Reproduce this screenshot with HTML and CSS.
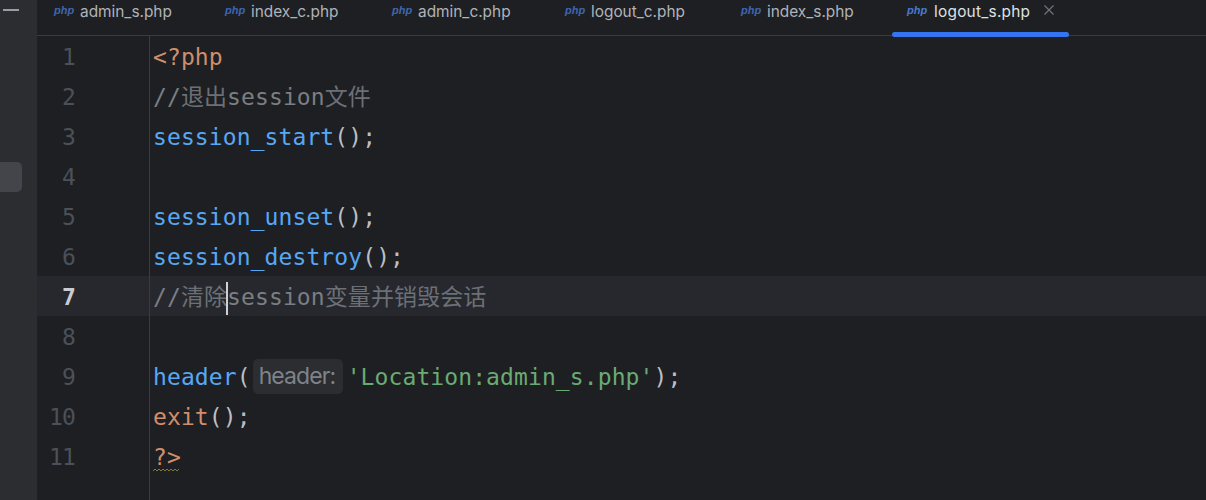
FILE: index.html
```html
<!DOCTYPE html>
<html lang="zh">
<head>
<meta charset="utf-8">
<title>logout_s.php</title>
<link rel="stylesheet" href="styles.css">
</head>
<body>
<div class="app">
  <aside class="rail">
    <div class="rail-dash"></div>
    <div class="rail-item"></div>
  </aside>
  <main class="main">
    <nav class="tabs">
      <div class="tab t1"><span class="php">php</span><span class="name">admin_s.php</span></div>
      <div class="tab t2"><span class="php">php</span><span class="name">index_c.php</span></div>
      <div class="tab t3"><span class="php">php</span><span class="name">admin_c.php</span></div>
      <div class="tab t4"><span class="php">php</span><span class="name">logout_c.php</span></div>
      <div class="tab t5"><span class="php">php</span><span class="name">index_s.php</span></div>
      <div class="tab active"><span class="php">php</span><span class="name">logout_s.php</span>
        <svg class="close" width="12" height="12" viewBox="0 0 12 12"><path d="M1.5 1.5l9 9M10.5 1.5l-9 9" stroke="#6f737a" stroke-width="1.2" fill="none"/></svg>
      </div>
    </nav>
    <section class="editor">
      <div class="line"><span class="no">1</span><span class="code"><span class="kw">&lt;?php</span></span></div>
      <div class="line"><span class="no">2</span><span class="code"><span class="cm">//<span class="cjk">退出</span>session<span class="cjk">文件</span></span></span></div>
      <div class="line"><span class="no">3</span><span class="code"><span class="fn">session_start</span><span class="pn">();</span></span></div>
      <div class="line"><span class="no">4</span><span class="code"></span></div>
      <div class="line"><span class="no">5</span><span class="code"><span class="fn">session_unset</span><span class="pn">();</span></span></div>
      <div class="line"><span class="no">6</span><span class="code"><span class="fn">session_destroy</span><span class="pn">();</span></span></div>
      <div class="line current"><span class="no">7</span><span class="code"><span class="cm">//<span class="cjk">清除</span><span class="caret"></span>session<span class="cjk">变量并销毁会话</span></span></span></div>
      <div class="line"><span class="no">8</span><span class="code"></span></div>
      <div class="line"><span class="no">9</span><span class="code"><span class="fn">header</span><span class="pn">(</span><span class="hint">header:</span><span class="str">'Location:admin_s.php'</span><span class="pn">);</span></span></div>
      <div class="line"><span class="no">10</span><span class="code"><span class="kw">exit</span><span class="pn">();</span></span></div>
      <div class="line"><span class="no">11</span><span class="code"><span class="kw squiggle">?&gt;<svg class="wave" width="28" height="4" viewBox="0 0 28 4"><path d="M0 3l2-2 2 2 2-2 2 2 2-2 2 2 2-2 2 2 2-2 2 2 2-2 2 2 2-2" fill="none" stroke="#807a3c" stroke-width="1"/></svg></span></span></div>
      <div class="gutter-fill"></div>
    </section>
  </main>
</div>
</body>
</html>
```
FILE: styles.css
```css
* { box-sizing: border-box; }
html, body { margin: 0; height: 100%; overflow: hidden; background: #1e1f22; }
.app { display: flex; height: 500px; width: 1206px; }
.rail { width: 37px; flex: none; background: #2b2d30; padding-top: 9px; }
.rail-dash { width: 16px; height: 2px; margin-left: 3px; background: #9a9da3; }
.rail-item { width: 22px; height: 30px; margin-top: 151px; background: #43454a; border-radius: 0 5px 5px 0; }
.main { flex: 1; min-width: 0; display: flex; flex-direction: column; }
.tabs { height: 36px; flex: none; display: flex; border-bottom: 1px solid #393b40; font-family: Inter, "Liberation Sans", sans-serif; font-size: 15.4px; color: #b0b3b9; }
.tab { display: flex; align-items: flex-start; padding: 3px 0 0 17px; height: 36px; }
.t1 { width: 171px; }
.t2 { width: 167px; }
.t3 { width: 173px; }
.t4 { width: 176px; }
.t5 { width: 168px; }
.tab .php { width: 26px; flex: none; font: italic bold 11px/14px "Liberation Sans", sans-serif; color: #3f66b0; }
.tab .name { line-height: 18px; }
.tab.active { position: relative; width: 177px; padding-left: 15px; color: #dfe1e5; }
.tab.active .name { letter-spacing: 0.25px; }
.tab.active .php { width: 27px; color: #4a7ad0; }
.tab.active::after { content: ""; position: absolute; left: 0; right: 0; bottom: -1px; height: 5px; background: #3574f0; border-radius: 3px; }
.close { margin: 1px 0 0 13px; flex: none; }
.editor { flex: 1; display: flex; flex-direction: column; font-family: "DejaVu Sans Mono", "Noto Sans CJK SC", monospace; font-size: 23px; line-height: 42px; letter-spacing: 0.1px; }
.line { display: flex; height: 40px; flex: none; white-space: pre; }
.no { width: 113px; flex: none; padding-right: 74px; text-align: right; letter-spacing: -0.8px; color: #4b5059; border-right: 1px solid #393b40; }
.gutter-fill { flex: 1; width: 113px; border-right: 1px solid #393b40; }
.code { padding-left: 3px; position: relative; color: #bcbec4; }
.current { background: #26282e; }
.current .no { color: #c8ccd2; font-weight: bold; }
.kw { color: #cf8e6d; }
.cm { color: #7a7e85; }
.cjk { color: #6c7076; }
.fn { color: #56a8f5; }
.pn { color: #bcbec4; }
.str { color: #6aab73; }
.hint { display: inline-block; vertical-align: top; width: 90px; height: 35px; margin: 3px 4px 0 2px; padding-left: 6px; background: #2b2d30; border-radius: 5px; color: #7f838a; font: 23px/34px Inter, "Liberation Sans", sans-serif; letter-spacing: -0.9px; }
.caret { position: relative; display: inline-block; width: 0; height: 0; }
.caret::after { content: ""; position: absolute; left: -1px; top: -23px; width: 2px; height: 33px; background: #ced0d6; }
.squiggle { position: relative; display: inline-block; }
.wave { position: absolute; left: 0; top: 32px; }
```
